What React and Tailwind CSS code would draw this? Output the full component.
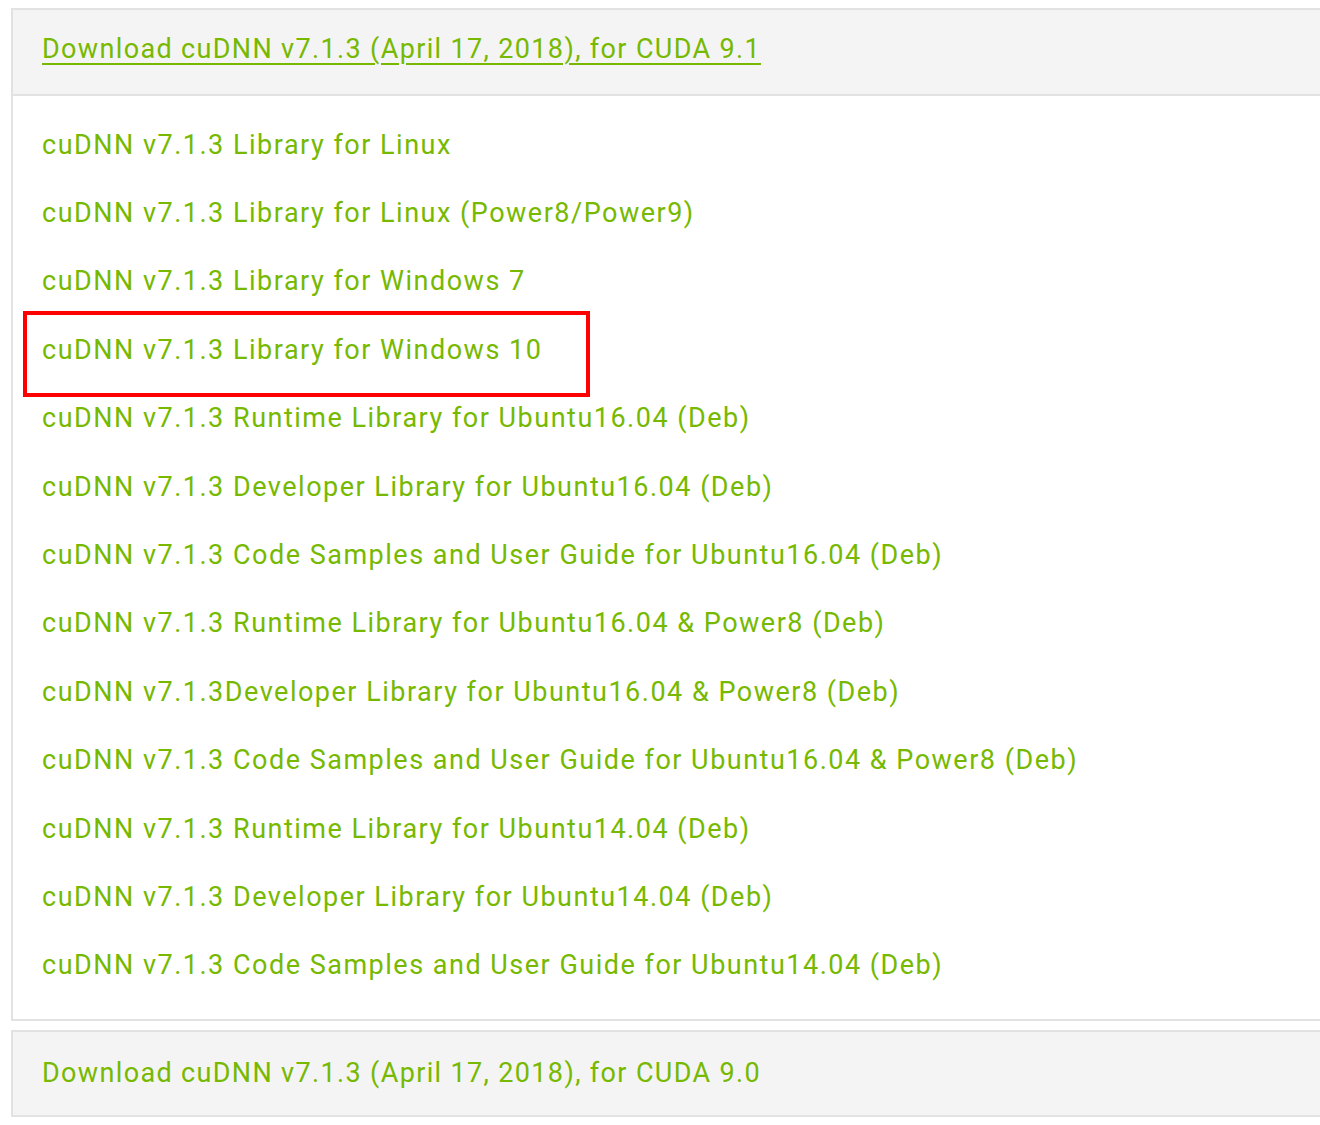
const LINKS = [
  "cuDNN v7.1.3 Library for Linux",
  "cuDNN v7.1.3 Library for Linux (Power8/Power9)",
  "cuDNN v7.1.3 Library for Windows 7",
  "cuDNN v7.1.3 Library for Windows 10",
  "cuDNN v7.1.3 Runtime Library for Ubuntu16.04 (Deb)",
  "cuDNN v7.1.3 Developer Library for Ubuntu16.04 (Deb)",
  "cuDNN v7.1.3 Code Samples and User Guide for Ubuntu16.04 (Deb)",
  "cuDNN v7.1.3 Runtime Library for Ubuntu16.04 & Power8 (Deb)",
  "cuDNN v7.1.3Developer Library for Ubuntu16.04 & Power8 (Deb)",
  "cuDNN v7.1.3 Code Samples and User Guide for Ubuntu16.04 & Power8 (Deb)",
  "cuDNN v7.1.3 Runtime Library for Ubuntu14.04 (Deb)",
  "cuDNN v7.1.3 Developer Library for Ubuntu14.04 (Deb)",
  "cuDNN v7.1.3 Code Samples and User Guide for Ubuntu14.04 (Deb)",
];

const HIGHLIGHT = 3;

export default function App() {
  return (
    <div
      className="min-h-[1125px] bg-white pt-[8px] pl-[11px] text-[#76b900]"
      style={{ fontFamily: "Roboto, 'Noto Sans', sans-serif" }}
    >
      {/* ── CUDA 9.1 panel (open) ── */}
      <div className="border-y-2 border-l-2 border-[#e2e2e2]">
        <div className="h-[86px] bg-[#f4f4f4] border-b-2 border-[#e2e2e2] pl-[29px] pb-[6px] flex items-center">
          <a className="text-[27px] tracking-[1.35px] underline decoration-2 underline-offset-[5px]">
            Download cuDNN v7.1.3 (April 17, 2018), for CUDA 9.1
          </a>
        </div>
        <ul className="pt-[15px] pb-[19px]">
          {LINKS.map((label, i) => (
            <li key={label} className="relative h-[68.4px] pl-[29px] flex items-center">
              <a className="text-[27px] tracking-[1.5px] leading-none">{label}</a>
              {i === HIGHLIGHT && (
                <span className="absolute left-[10px] top-[-5px] w-[567px] h-[86px] border-[4px] border-[#ff0000]" />
              )}
            </li>
          ))}
        </ul>
      </div>

      {/* ── CUDA 9.0 panel (closed) ── */}
      <div className="mt-[9px] h-[87px] bg-[#f4f4f4] border-y-2 border-l-2 border-[#e2e2e2] pl-[29px] flex items-center">
        <a className="text-[27px] tracking-[1.35px]">Download cuDNN v7.1.3 (April 17, 2018), for CUDA 9.0</a>
      </div>
    </div>
  );
}
